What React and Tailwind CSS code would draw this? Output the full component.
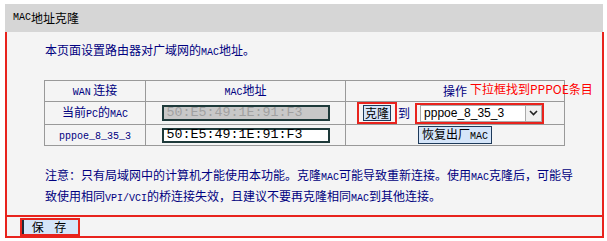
import React from "react";

const L = ({ children, className = "" }) => (
  <span className={"font-['Liberation_Mono'] text-[10px] " + className}>{children}</span>
);

export default function App() {
  return (
    <div className="w-[607px] h-[241px] bg-white pt-[4px] pl-[5px] font-['Noto_Sans_CJK_SC',sans-serif] text-[12px] leading-[16px] text-[#000080] relative">
      <div className="w-[599px]">
        <div className="h-[28px] bg-[#d6d6d6] flex items-center pl-[8px] text-black w-[598px]">
          <L className="text-black">MAC</L>地址克隆
        </div>
        <div className="border-x-2 border-b-2 border-[#e8231d] bg-[#f4f4f4]">
          <div className="pl-[38px] pt-[10px] h-[48px]">
            本页面设置路由器对广域网的<L>MAC</L>地址。
          </div>
          <div className="pl-[37px]">
            <table className="table-fixed border-collapse w-[520px]">
              <colgroup>
                <col className="w-[101px]" />
                <col className="w-[200px]" />
                <col className="w-[219px]" />
              </colgroup>
              <tbody>
                <tr className="h-[21px]">
                  <td className="border border-[#999] text-center p-0">
                    <L>WAN</L> 连接
                  </td>
                  <td className="border border-[#999] text-center p-0">
                    <L>MAC</L>地址
                  </td>
                  <td className="border border-[#999] text-center p-0">操作</td>
                </tr>
                <tr className="h-[22px]">
                  <td className="border border-[#999] text-center p-0">
                    当前<L>PC</L>的<L>MAC</L>
                  </td>
                  <td className="border border-[#999] p-0">
                    <div className="mx-auto w-[168px] h-[16px] border-2 border-[#1e3a3a] bg-[#c8c8c8] text-[#a0a0a0] font-['Liberation_Mono'] text-[13.33px] leading-[12px] pl-[3px] flex items-center">
                      50:E5:49:1E:91:F3
                    </div>
                  </td>
                  <td className="border border-[#999] p-0">
                    <div className="flex items-center pl-[11px]">
                      <div className="border-2 border-[#e8231d] px-[4px] py-[1px] flex">
                        <div className="bg-[#d5e5f9] border border-[#1e3a5a] px-[1px] leading-[14px] text-black">克隆</div>
                      </div>
                      <span className="ml-[1px] mr-[5px]">到</span>
                      <div className="border-2 border-[#e8231d] w-[129px] h-[21px] flex items-center pl-[3px]">
                        <div className="w-[122px] h-[17px] bg-white border border-[#aaa] flex items-center">
                          <span className="flex-1 pl-[3px] font-['Liberation_Sans'] text-[12px] text-black leading-[14px]">pppoe_8_35_3</span>
                          <div className="w-[16px] h-[15px] bg-[#f0f0f0] border-l border-[#aaa] flex items-center justify-center">
                            <svg width="9" height="6" viewBox="0 0 9 6">
                              <path d="M1 1 L4.5 4.5 L8 1" fill="none" stroke="#222" strokeWidth="1.6" />
                            </svg>
                          </div>
                        </div>
                      </div>
                    </div>
                  </td>
                </tr>
                <tr className="h-[21px]">
                  <td className="border border-[#999] text-center p-0">
                    <L>pppoe_8_35_3</L>
                  </td>
                  <td className="border border-[#999] p-0">
                    <div className="mx-auto w-[168px] h-[15px] border-2 border-[#1e3a3a] bg-white text-black font-['Liberation_Mono'] text-[13.33px] leading-[12px] pl-[3px] flex items-center">
                      50:E5:49:1E:91:F3
                    </div>
                  </td>
                  <td className="border border-[#999] p-0">
                    <div className="flex justify-center">
                      <div className="bg-[#d5e5f9] border border-[#1e3a5a] px-[3px] leading-[13px] text-black">
                        恢复出厂<L className="text-black">MAC</L>
                      </div>
                    </div>
                  </td>
                </tr>
              </tbody>
            </table>
          </div>
          <div className="pl-[38px] pt-[20px] leading-[18px] h-[69px] pr-[20px]">
            <div>注意：只有局域网中的计算机才能使用本功能。克隆<L>MAC</L>可能导致重新连接。使用<L>MAC</L>克隆后，可能导</div>
            <div>致使用相同<L>VPI/VCI</L>的桥连接失效，且建议不要再克隆相同<L>MAC</L>到其他连接。</div>
          </div>
          <div className="border-t-2 border-[#e8231d] h-[21px] pl-[13px] pt-[1px]">
            <div className="w-[60px] h-[18px] border-2 border-[#e8231d] flex">
              <div className="flex-1 bg-[#d5e5f9] border-l-2 border-[#1e2a3a] text-black text-center leading-[14px] tracking-[4px]">
                保 存
              </div>
            </div>
          </div>
        </div>
      </div>
      <div className="absolute left-[470px] top-[81px] text-[12px] leading-[15px] text-[#ff0000] font-['Noto_Sans_CJK_SC',sans-serif]">
        下拉框找到PPPOE条目
      </div>
    </div>
  );
}
